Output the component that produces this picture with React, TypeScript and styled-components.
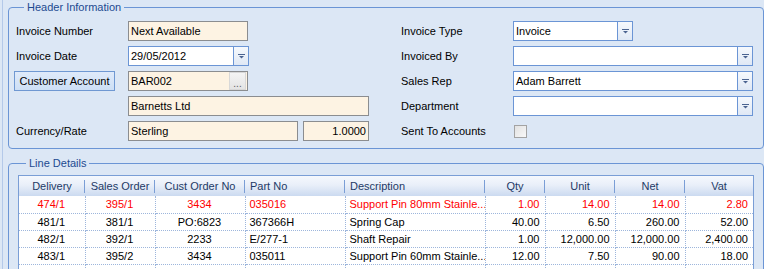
import React from "react";
import styled, { createGlobalStyle } from "styled-components";

const GlobalStyle = createGlobalStyle`
  body {
    margin: 0;
    background: #dce7f5;
    font-family: "Liberation Sans", Arial, sans-serif;
    font-size: 11px;
    color: #000;
  }
`;

type Line = {
  delivery: string;
  salesOrder: string;
  custOrder: string;
  partNo: string;
  description: string;
  qty: string;
  unit: string;
  net: string;
  vat: string;
  flagged?: boolean;
};

const lines: Line[] = [
  { delivery: "474/1", salesOrder: "395/1", custOrder: "3434", partNo: "035016", description: "Support Pin 80mm Stainle...", qty: "1.00", unit: "14.00", net: "14.00", vat: "2.80", flagged: true },
  { delivery: "481/1", salesOrder: "381/1", custOrder: "PO:6823", partNo: "367366H", description: "Spring Cap", qty: "40.00", unit: "6.50", net: "260.00", vat: "52.00" },
  { delivery: "482/1", salesOrder: "392/1", custOrder: "2233", partNo: "E/277-1", description: "Shaft Repair", qty: "1.00", unit: "12,000.00", net: "12,000.00", vat: "2,400.00" },
  { delivery: "483/1", salesOrder: "395/2", custOrder: "3434", partNo: "035011", description: "Support Pin 60mm Stainle...", qty: "12.00", unit: "7.50", net: "90.00", vat: "18.00" },
];

type Align = "left" | "center" | "right";

const columns: { title: string; key: keyof Line; width: number; align: Align }[] = [
  { title: "Delivery", key: "delivery", width: 66, align: "center" },
  { title: "Sales Order", key: "salesOrder", width: 70, align: "center" },
  { title: "Cust Order No", key: "custOrder", width: 90, align: "center" },
  { title: "Part No", key: "partNo", width: 100, align: "left" },
  { title: "Description", key: "description", width: 140, align: "left" },
  { title: "Qty", key: "qty", width: 60, align: "right" },
  { title: "Unit", key: "unit", width: 70, align: "right" },
  { title: "Net", key: "net", width: 70, align: "right" },
  { title: "Vat", key: "vat", width: 68, align: "right" },
];

const DropArrow = () => (
  <svg width="7" height="5" viewBox="0 0 7 5">
    <rect x="0" y="0" width="7" height="1" fill="#4a6390" />
    <path d="M1 2 H6 L3.5 4.5 Z" fill="#4a6390" />
  </svg>
);

const App = () => (
  <>
    <GlobalStyle />
    <Screen>
      <GroupBox $pad="7px 7px 7px 7px">
        <GroupTitle>Header Information</GroupTitle>
        <FormArea>
          <FormColumn $fieldWidth={241}>
            <Label>Invoice Number</Label>
            <Field $width={120} $tone="cream">Next Available</Field>
            <Label>Invoice Date</Label>
            <Combo $width={121}>
              <ComboText>29/05/2012</ComboText>
              <DropButton><DropArrow /></DropButton>
            </Combo>
            <AccountButton>Customer Account</AccountButton>
            <Field $width={120} $tone="cream">
              <FieldText>BAR002</FieldText>
              <EllipsisButton>...</EllipsisButton>
            </Field>
            <span />
            <Field $width={241} $tone="cream">Barnetts Ltd</Field>
            <Label>Currency/Rate</Label>
            <FieldPair>
              <Field $width={170} $tone="cream">Sterling</Field>
              <Field $width={66} $tone="cream" $align="right">1.0000</Field>
            </FieldPair>
          </FormColumn>
          <FormColumn $fieldWidth={240}>
            <Label>Invoice Type</Label>
            <Combo $width={120}>
              <ComboText>Invoice</ComboText>
              <DropButton><DropArrow /></DropButton>
            </Combo>
            <Label>Invoiced By</Label>
            <Combo $width={240}>
              <ComboText />
              <DropButton><DropArrow /></DropButton>
            </Combo>
            <Label>Sales Rep</Label>
            <Combo $width={240}>
              <ComboText>Adam Barrett</ComboText>
              <DropButton><DropArrow /></DropButton>
            </Combo>
            <Label>Department</Label>
            <Combo $width={240}>
              <ComboText />
              <DropButton><DropArrow /></DropButton>
            </Combo>
            <Label>Sent To Accounts</Label>
            <CheckBox />
          </FormColumn>
        </FormArea>
      </GroupBox>

      <GroupBox $pad="5px 9px 0 9px" $gapTop={8}>
        <GroupTitle>Line Details</GroupTitle>
        <GridFrame>
          <Grid>
            <colgroup>
              {columns.map((c) => (
                <col key={c.key} style={{ width: c.width }} />
              ))}
            </colgroup>
            <thead>
              <tr>
                {columns.map((c) => (
                  <HeadCell key={c.key} $align={c.align === "left" ? "left" : "center"}>
                    {c.title}
                  </HeadCell>
                ))}
              </tr>
            </thead>
            <tbody>
              {lines.map((line, i) => (
                <Row key={i} $flagged={line.flagged}>
                  {columns.map((c) => (
                    <Cell key={c.key} $align={c.align}>
                      {line[c.key]}
                    </Cell>
                  ))}
                </Row>
              ))}
              <Row>
                {columns.map((c) => (
                  <Cell key={c.key} $align={c.align} />
                ))}
              </Row>
            </tbody>
          </Grid>
        </GridFrame>
      </GroupBox>
    </Screen>
  </>
);

/////////////////////////////// LAYOUT /////////////////////////////////
const Screen = styled.div`
  height: 268px;
  overflow: hidden;
  margin-left: 2px;
  padding: 1px 0 0 5px;
  border-left: 1px solid #b4c9e9;
`;

const GroupBox = styled.fieldset<{ $pad: string; $gapTop?: number }>`
  box-sizing: border-box;
  width: 756px;
  min-width: 0;
  margin: ${(p) => p.$gapTop ?? 0}px 0 0 0;
  padding: ${(p) => p.$pad};
  border: 1px solid #6b95d5;
  border-radius: 4px;
`;

const GroupTitle = styled.legend`
  margin-left: 8px;
  padding: 0 3px;
  line-height: 13px;
  color: #1d4a91;
`;

/////////////////////////////// FORM /////////////////////////////////
const FormArea = styled.div`
  display: flex;
  gap: 32px;
`;

const FormColumn = styled.div<{ $fieldWidth: number }>`
  display: grid;
  grid-template-columns: 112px ${(p) => p.$fieldWidth}px;
  grid-auto-rows: 20px;
  row-gap: 5px;
  align-items: center;
`;

const Label = styled.div`
  line-height: 13px;
`;

const Field = styled.div<{ $width: number; $tone: "cream" | "white"; $align?: Align }>`
  box-sizing: border-box;
  display: flex;
  align-items: center;
  justify-content: ${(p) => (p.$align === "right" ? "flex-end" : "flex-start")};
  width: ${(p) => p.$width}px;
  height: 20px;
  padding: 0 2px;
  background: ${(p) => (p.$tone === "cream" ? "#fdf3e3" : "#fff")};
  border: 1px solid #8b8d90;
  white-space: nowrap;
`;

const FieldText = styled.span`
  flex: 1;
`;

const FieldPair = styled.div`
  display: flex;
  gap: 5px;
`;

const Combo = styled.div<{ $width: number }>`
  box-sizing: border-box;
  display: flex;
  width: ${(p) => p.$width}px;
  height: 20px;
  background: #fff;
  border: 1px solid #6b95d5;
`;

const ComboText = styled.div`
  flex: 1;
  display: flex;
  align-items: center;
  padding-left: 2px;
`;

const DropButton = styled.div`
  width: 14px;
  display: flex;
  align-items: center;
  justify-content: center;
  border-left: 1px solid #6b95d5;
  background: linear-gradient(#f6f9fd, #dfe8f5);
`;

const EllipsisButton = styled.div`
  width: 15px;
  height: 16px;
  margin-right: -1px;
  display: flex;
  align-items: flex-end;
  justify-content: center;
  line-height: 10px;
  font-size: 10px;
  color: #606060;
  background: linear-gradient(#f4f4f4, #e4e4e4);
  border: 1px solid #d8d8d8;
`;

const AccountButton = styled.div`
  box-sizing: border-box;
  width: 101px;
  height: 20px;
  margin-left: -2px;
  display: flex;
  align-items: center;
  justify-content: center;
  background: linear-gradient(#dfeafa, #cddff5);
  border: 1px solid #6f98d2;
`;

const CheckBox = styled.div`
  box-sizing: border-box;
  width: 13px;
  height: 13px;
  margin-left: 1px;
  border: 1px solid #a3a3a3;
  background: linear-gradient(135deg, #e2e2e2, #f8f8f8);
`;

/////////////////////////////// GRID /////////////////////////////////
const GridFrame = styled.div`
  background: #fff;
  border: 1px solid #7a9ed6;
  border-bottom: none;
  height: 200px;
`;

const Grid = styled.table`
  width: 100%;
  table-layout: fixed;
  border-collapse: collapse;
`;

const HeadCell = styled.th<{ $align: "left" | "center" }>`
  position: relative;
  height: 20px;
  padding: 0 5px;
  text-align: ${(p) => p.$align};
  font-weight: normal;
  color: #1e3a66;
  white-space: nowrap;
  background: linear-gradient(#f5f8fd 0%, #e9eff9 45%, #cbdaf0 100%);

  &:not(:last-child)::after {
    content: "";
    position: absolute;
    right: 0;
    top: 4px;
    bottom: 3px;
    width: 1px;
    background: #7a9ed6;
  }
`;

const Row = styled.tr<{ $flagged?: boolean }>`
  height: 17px;
  color: ${(p) => (p.$flagged ? "#ff0000" : "#000")};
`;

const Cell = styled.td<{ $align: Align }>`
  padding: 0 5px 0 4px;
  text-align: ${(p) => p.$align};
  white-space: nowrap;
  overflow: hidden;
  border-bottom: 1px dotted #9db6dc;

  &:not(:last-child) {
    border-right: 1px dotted #9db6dc;
  }
`;

export default App;
